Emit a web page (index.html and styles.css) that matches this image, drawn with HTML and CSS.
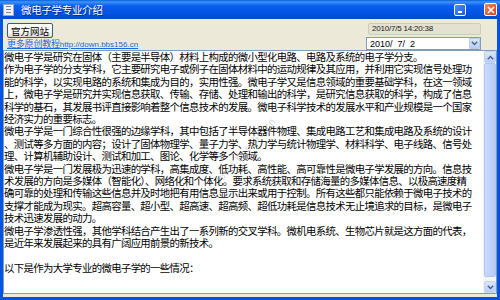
FILE: index.html
```html
<!DOCTYPE html>
<html lang="zh-CN">
<head>
    <meta charset="UTF-8">
    <title>微电子学专业介绍</title>
    <link rel="stylesheet" href="styles.css">
</head>
<body>

    <div class="window">
        <div class="titlebar">
            <span class="app_icon"><i></i><i></i><i></i></span>
            <span class="title">微电子学专业介绍</span>
            <span class="btn_min"><i></i></span>
            <span class="btn_close">
                <svg width="8" height="8" viewBox="0 0 8 8"><path d="M1 1L7 7M7 1L1 7" stroke="#fff" stroke-width="1.6"/></svg>
            </span>
        </div>

        <div class="client">
            <div class="toolbar">
                <div class="left_col">
                    <button class="xp_btn">官方网站</button>
                    <a class="link" href="#">更多原创教程<span class="url">http://down.bbs156.cn</span></a>
                </div>
                <div class="right_col">
                    <div class="time_label">2010/7/5 14:20:38</div>
                    <div class="date_pick">
                        <span class="date_val">2010/&nbsp; 7/&nbsp; 2</span>
                        <span class="drop_btn">
                            <svg width="7" height="5" viewBox="0 0 7 5"><path d="M0.8 0.8L3.5 3.6L6.2 0.8" fill="none" stroke="#4d6185" stroke-width="1.4"/></svg>
                        </span>
                    </div>
                </div>
            </div>

            <div class="memo">
                <div class="memo_text">微电子学是研究在固体（主要是半导体）材料上构成的微小型化电路、电路及系统的电子学分支。
作为电子学的分支学科，它主要研究电子或例子在固体材料中的运动规律及其应用，并利用它实现信号处理功
能的科学，以实现电路的系统和集成为目的，实用性强。微电子学又是信息领域的重要基础学科，在这一领域
上，微电子学是研究并实现信息获取、传输、存储、处理和输出的科学，是研究信息获取的科学，构成了信息
科学的基石，其发展书评直接影响着整个信息技术的发展。微电子科学技术的发展水平和产业规模是一个国家
经济实力的重要标志。
微电子学是一门综合性很强的边缘学科，其中包括了半导体器件物理、集成电路工艺和集成电路及系统的设计
、测试等多方面的内容；设计了固体物理学、量子力学、热力学与统计物理学、材料科学、电子线路、信号处
理、计算机辅助设计、测试和加工、图论、化学等多个领域。
微电子学是一门发展极为迅速的学科，高集成度、低功耗、高性能、高可靠性是微电子学发展的方向。信息技
术发展的方向是多媒体（智能化）、网络化和个体化。要求系统获取和存储海量的多媒体信息、以极高速度精
确可靠的处理和传输这些信息并及时地把有用信息显示出来或用于控制。所有这些都只能依赖于微电子技术的
支撑才能成为现实。超高容量、超小型、超高速、超高频、超低功耗是信息技术无止境追求的目标，是微电子
技术迅速发展的动力。
微电子学渗透性强，其他学科结合产生出了一系列新的交叉学科。微机电系统、生物芯片就是这方面的代表，
是近年来发展起来的具有广阔应用前景的新技术。

以下是作为大学专业的微电子学的一些情况：</div>
                <div class="scrollbar">
                    <span class="sb_btn">
                        <svg width="7" height="5" viewBox="0 0 7 5"><path d="M0.8 4.2L3.5 1.4L6.2 4.2" fill="none" stroke="#4d6185" stroke-width="1.4"/></svg>
                    </span>
                    <span class="sb_thumb"></span>
                    <span class="sb_track"></span>
                    <span class="sb_btn">
                        <svg width="7" height="5" viewBox="0 0 7 5"><path d="M0.8 0.8L3.5 3.6L6.2 0.8" fill="none" stroke="#4d6185" stroke-width="1.4"/></svg>
                    </span>
                </div>
                <span class="watermark">©down.bbs156.cn</span>
            </div>
        </div>
    </div>

</body>
</html>
```

FILE: styles.css
```css
*{margin:0;padding:0;box-sizing:border-box;}
body{width:500px;height:300px;overflow:hidden;font-family:"Noto Sans CJK SC","Liberation Sans",sans-serif;}

.window{width:500px;height:300px;display:flex;flex-direction:column;background-color:#0054e3;}

/* title bar */
.titlebar{height:19px;display:flex;align-items:center;padding:0 3px 0 3px;
    background:linear-gradient(#0b5fd9 0%,#3d93fb 10%,#0a5ef0 30%,#0055e5 65%,#0049cc 100%);}
.app_icon{width:11px;height:12px;background-color:#f2f2f2;border:1px solid #9aa8c8;display:flex;flex-direction:column;justify-content:space-around;padding:1px 2px;}
.app_icon i{display:block;height:1px;background-color:#7d8597;}
.title{margin-left:7px;flex:1;color:#fff;font-size:10.5px;letter-spacing:-0.3px;text-shadow:1px 1px 0 #0a2a8a;}
.btn_min{width:12px;height:12px;border:1px solid #fff;border-radius:2px;background:linear-gradient(135deg,#4d8dff,#2259de);display:flex;align-items:flex-end;padding:0 0 2px 3px;margin-right:18px;}
.btn_min i{display:block;width:4px;height:2px;background-color:#fff;}
.btn_close{width:13px;height:13px;border:1px solid #fff;border-radius:2px;background:linear-gradient(135deg,#e8876b,#d6401c);display:flex;align-items:center;justify-content:center;}

/* client area */
.client{flex:1;display:flex;flex-direction:column;background-color:#ece9d8;margin:0 3px 3px 3px;padding-bottom:3px;}

.toolbar{height:31px;display:flex;justify-content:space-between;padding:3px 16px 0 4px;}
.left_col{display:flex;flex-direction:column;align-items:flex-start;}
.xp_btn{width:46px;height:15px;margin-top:1px;border:1px solid #335a8f;border-radius:2px;background:linear-gradient(#ffffff,#f3f2ec 70%,#dcd8cb);font-family:"Noto Sans CJK SC",sans-serif;font-size:9.5px;line-height:12px;color:#000;}
.link{margin-top:1px;font-size:9px;line-height:10px;color:#1a6ad8;text-decoration:underline;letter-spacing:-0.2px;}
.link .url{font-family:"Liberation Sans",sans-serif;font-size:8px;letter-spacing:0;}

.right_col{width:115px;display:flex;flex-direction:column;align-items:flex-end;padding-top:1px;}
.time_label{width:113px;height:12px;background-color:#e4e1d1;border:1px solid #d0ccbb;border-radius:2px;font-family:"Liberation Sans",sans-serif;font-size:8px;line-height:10px;padding-left:3px;color:#222;letter-spacing:-0.2px;}
.date_pick{width:115px;height:13px;margin-top:2px;background-color:#fff;border:1px solid #7f9db9;display:flex;align-items:center;justify-content:space-between;}
.date_val{font-family:"Liberation Sans",sans-serif;font-size:9px;padding-left:3px;color:#000;}
.drop_btn{width:11px;height:11px;background:linear-gradient(#dbe6fd,#b7cdf7);border:1px solid #bccbec;border-radius:1px;display:flex;align-items:center;justify-content:center;}

/* memo */
.memo{flex:1;position:relative;display:flex;background-color:#fff;border:1px solid #7f9db9;overflow:hidden;}
.memo_text{flex:1;white-space:pre;font-size:10.4px;line-height:12.4px;letter-spacing:-0.65px;color:#000;}
.scrollbar{width:13px;display:flex;flex-direction:column;background-color:#f6f6f0;}
.sb_btn{height:12px;margin-left:1px;background:linear-gradient(#dbe6fd,#b9cff8);border:1px solid #c3d3f5;border-radius:2px;display:flex;align-items:center;justify-content:center;}
.sb_thumb{flex:1;margin-left:1px;background:linear-gradient(90deg,#c8d9fb,#b6cbf6);border:1px solid #b0c5f0;border-radius:2px;}
.sb_track{height:4px;}

.watermark{position:absolute;left:202px;top:135px;transform:rotate(-48deg);transform-origin:left top;font-family:"Liberation Sans",sans-serif;font-size:10px;color:rgba(110,110,110,0.3);letter-spacing:1px;}
```
